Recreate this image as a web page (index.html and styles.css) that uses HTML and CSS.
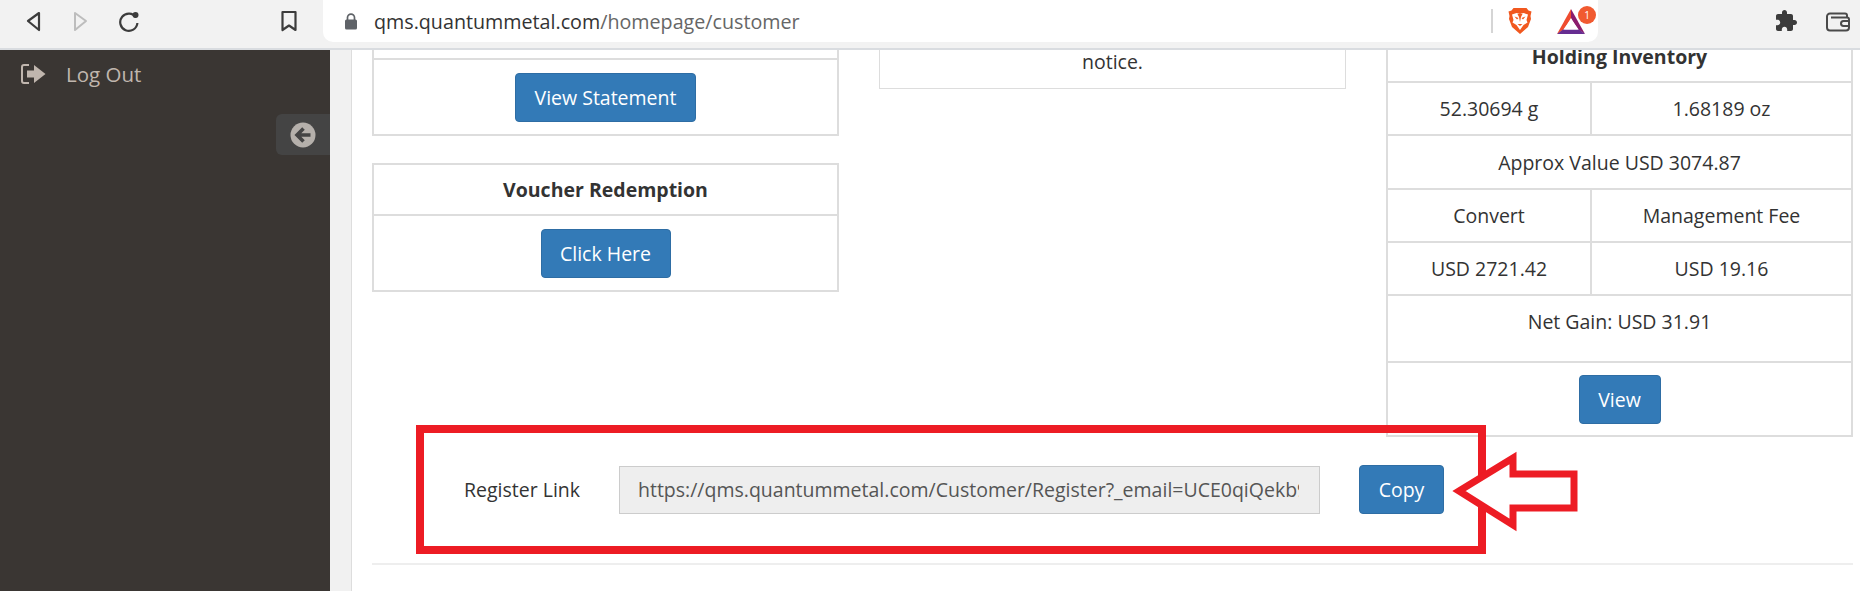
FILE: index.html
```html
<!DOCTYPE html>
<html lang="en">
<head>
    <meta charset="UTF-8">
    <title>Customer</title>
    <link rel="stylesheet" href="styles.css">
</head>
<body>
    <header class="toolbar">
        <button class="nav-btn">
            <svg width="24" height="24" viewBox="0 0 24 24"><path d="M18 4 L7 12 L18 21 Z" fill="none" stroke="#3c3c3c" stroke-width="2.2" stroke-linejoin="round"/></svg>
        </button>
        <button class="nav-btn">
            <svg width="24" height="24" viewBox="0 0 24 24"><path d="M6 4 L17 12 L6 21 Z" fill="none" stroke="#bdbdbd" stroke-width="2" stroke-linejoin="round"/></svg>
        </button>
        <button class="nav-btn">
            <svg width="24" height="24" viewBox="0 0 24 24"><path d="M19 8.5 A8.6 8.6 0 1 0 20.4 14" fill="none" stroke="#3c3c3c" stroke-width="2.2"/><circle cx="18.5" cy="6" r="3" fill="#3c3c3c"/></svg>
        </button>
        <button class="nav-btn bookmark">
            <svg width="24" height="24" viewBox="0 0 24 24"><path d="M5.5 3 H18.5 V21 L12 16.5 L5.5 21 Z" fill="none" stroke="#3c3c3c" stroke-width="2.2" stroke-linejoin="round"/></svg>
        </button>
        <div class="urlbar">
            <svg class="lock" width="14" height="17" viewBox="0 0 14 17"><path d="M3.5 7 V4.6 a3.5 3.5 0 0 1 7 0 V7" fill="none" stroke="#5f6368" stroke-width="1.7"/><rect x="1" y="6.5" width="12" height="10" rx="1.5" fill="#5f6368"/></svg>
            <span class="url"><span class="url-host">qms.quantummetal.com</span>/homepage/customer</span>
            <span class="url-sep"></span>
            <svg class="brave" width="24" height="28" viewBox="0 0 24 28">
                <path d="M5.5 1 H18.5 L20.5 3.5 L23.5 4.5 L22.5 9 L23 12 L20 20 L12 27 L4 20 L1 12 L1.5 9 L0.5 4.5 L3.5 3.5 Z" fill="#f1581f"/>
                <path d="M4 7.5 L8.5 6 L12 7 L15.500 6 L20 7.500 L18.500 13 L19.500 15.500 L15.500 18 L12 23 L8.500 18 L4.500 15.500 L5.500 13 Z" fill="#fff"/>
                <path d="M6.500 9.500 L10.500 11 L9 12.500 Z M17.500 9.500 L13.500 11 L15 12.500 Z M9.500 7 H14.500 L13 10 L12 15 L11 10 Z M9.500 17 H14.500 L12 19 Z" fill="#f1581f"/>
            </svg>
            <span class="bat">
                <svg width="28" height="25" viewBox="0 0 28 25">
                    <path d="M14 0 L14 10 L6 21 L0 25 Z" fill="#ef4c2f"/>
                    <path d="M14 0 L14 10 L22 21 L28 25 Z" fill="#8a1d6d"/>
                    <path d="M0 25 L6 20.5 H22 L28 25 Z" fill="#662d91"/>
                    <path d="M14 9 L21 20.5 H7 Z" fill="#fff"/>
                </svg>
                <span class="bat-badge">1</span>
            </span>
        </div>
        <svg class="puzzle" width="24" height="24" viewBox="0 0 24 24"><path d="M20.5 11H19V7c0-1.1-.9-2-2-2h-4V3.500C13 2.120 11.880 1 10.500 1S8 2.120 8 3.500V5H4c-1.100 0-1.990.9-1.990 2v3.800H3.500c1.490 0 2.700 1.210 2.700 2.700s-1.210 2.700-2.700 2.700H2V20c0 1.100.9 2 2 2h3.800v-1.500c0-1.490 1.210-2.700 2.700-2.700 1.490 0 2.700 1.210 2.700 2.700V22H17c1.100 0 2-.9 2-2v-4h1.500c1.380 0 2.500-1.120 2.500-2.500S21.880 11 20.500 11z" fill="#3c3c3c"/></svg>
        <svg class="wallet" width="24" height="20" viewBox="0 0 24 20"><path d="M21 5.500 V3.500 a2 2 0 0 0 -2 -2 H4 a3 3 0 0 0 -3 3 V15.500 a3 3 0 0 0 3 3 H20 a3 3 0 0 0 3 -3 V7.500 a2 2 0 0 0 -2 -2 H5" fill="none" stroke="#4a4a4a" stroke-width="2"/><path d="M23 9 H17.500 a2.500 2.500 0 0 0 0 5 H23" fill="none" stroke="#4a4a4a" stroke-width="2"/></svg>
    </header>

    <div class="page">
        <aside class="sidebar">
            <a class="side-link">
                <svg width="25" height="20" viewBox="0 0 25 20"><path d="M8 1 H3 a2 2 0 0 0 -2 2 V17 a2 2 0 0 0 2 2 H8" fill="none" stroke="#c0b6ae" stroke-width="2"/><path d="M6 6.500 H13 V1 L24.500 10 L13 19 V13.500 H6 Z" fill="#c0b6ae"/></svg>
                Log Out
            </a>
            <button class="side-toggle">
                <svg width="26" height="26" viewBox="0 0 26 26"><circle cx="13" cy="13" r="12.500" fill="#b5b0ab"/><path d="M20.500 13 H8 M13.500 6.500 L7 13 L13.500 19.500" fill="none" stroke="#444" stroke-width="3.600"/></svg>
            </button>
        </aside>
        <div class="gutter"></div>
        <main class="content">
            <div class="columns">
                <div class="col">
                    <div class="panel">
                        <div class="panel-head panel-head-cut"></div>
                        <div class="panel-foot"><button class="btn btn-wide">View Statement</button></div>
                    </div>
                    <div class="panel">
                        <div class="panel-head">Voucher Redemption</div>
                        <div class="panel-foot"><button class="btn btn-click">Click Here</button></div>
                    </div>
                </div>
                <div class="col">
                    <div class="notice">notice.</div>
                </div>
                <div class="col">
                    <div class="panel">
                        <table class="holding">
                            <tr class="row-51"><th colspan="2">Holding Inventory</th></tr>
                            <tr class="row-53"><td class="half">52.30694 g</td><td>1.68189 oz</td></tr>
                            <tr class="row-54"><td colspan="2">Approx Value USD 3074.87</td></tr>
                            <tr class="row-53"><td class="half">Convert</td><td>Management Fee</td></tr>
                            <tr class="row-53"><td class="half">USD 2721.42</td><td>USD 19.16</td></tr>
                            <tr class="row-67"><td colspan="2" class="top">Net Gain: USD 31.91</td></tr>
                            <tr class="row-73"><td colspan="2"><button class="btn btn-view">View</button></td></tr>
                        </table>
                    </div>
                </div>
            </div>
            <div class="register">
                <label class="register-label">Register Link</label>
                <input class="register-input" type="text" readonly value="https://qms.quantummetal.com/Customer/Register?_email=UCE0qiQekb9sTn2xLm8">
                <button class="btn btn-copy">Copy</button>
            </div>
            <hr class="rule">
        </main>
    </div>

    <svg class="markup" width="1860" height="591" viewBox="0 0 1860 591">
        <rect x="420" y="429" width="1062" height="121" fill="none" stroke="#ed1c24" stroke-width="8"/>
        <path d="M1459 491 L1513 458 V474 H1574 V508 H1513 V525 Z" fill="#fff" stroke="#ed1c24" stroke-width="7"/>
    </svg>
</body>
</html>
```

FILE: styles.css
```css
* {
    box-sizing: border-box;
}

body {
    font-family: 'Open Sans', sans-serif;
    font-size: 19.5px;
    color: #333;
    margin: 0;
    height: 591px;
    overflow: hidden;
    background: #fff;
    position: relative;
}

button {
    font-family: inherit;
}

/* browser bar */
.toolbar {
    height: 50px;
    display: flex;
    align-items: flex-start;
    padding-left: 9px;
    background: #f2f2f2;
    border-bottom: 2px solid #d9dce0;
}

.nav-btn {
    width: 48px;
    height: 42px;
    padding: 0;
    border: 0;
    background: none;
    display: flex;
    align-items: center;
    justify-content: center;
}

.bookmark {
    margin-left: 112px;
}

.urlbar {
    width: 1275px;
    height: 42px;
    margin-left: 10px;
    padding-left: 21px;
    display: flex;
    align-items: center;
    background: #fff;
    border-radius: 0 0 10px 10px;
}

.lock {
    margin-right: 16px;
}

.url {
    width: 1100px;
    font-size: 19.7px;
    color: #666;
}

.url-host {
    color: #333;
}

.url-sep {
    width: 2px;
    height: 24px;
    background: #d5d5d5;
    margin-left: 17px;
}

.brave {
    margin-left: 15px;
}

.bat {
    position: relative;
    display: flex;
    margin-left: 25px;
}

.bat-badge {
    position: absolute;
    top: -3px;
    right: -11px;
    width: 18px;
    height: 18px;
    border-radius: 50%;
    background: #f15a30;
    color: #fff;
    font-size: 10px;
    line-height: 18px;
    text-align: center;
}

.puzzle {
    margin: 9px 0 0 176px;
}

.wallet {
    margin: 12px 0 0 28px;
}

/* page */
.page {
    display: flex;
    height: 541px;
}

.sidebar {
    width: 330px;
    background: #3a3633;
    padding-top: 12px;
    display: flex;
    flex-direction: column;
    align-items: flex-end;
}

.side-link {
    align-self: flex-start;
    display: flex;
    align-items: center;
    gap: 20px;
    margin-left: 21px;
    color: #c0b6ae;
    font-size: 20.5px;
    line-height: 24px;
}

.side-toggle {
    width: 54px;
    height: 41px;
    margin-top: 28px;
    padding: 0 0 0 14px;
    border: 0;
    border-radius: 6px 0 0 6px;
    background: #444;
    display: flex;
    align-items: center;
}

.gutter {
    width: 22px;
    background: #f1f1f1;
    border-right: 1px solid #ddd;
}

.content {
    flex: 1;
    padding-left: 20px;
    overflow: hidden;
}

.columns {
    display: grid;
    grid-template-columns: repeat(3, 467px);
    column-gap: 40px;
    margin-top: -21px;
}

.panel {
    border: 2px solid #ddd;
    background: #fff;
    margin-bottom: 27px;
}

.panel-head {
    height: 51px;
    font-weight: 700;
    display: flex;
    align-items: center;
    justify-content: center;
    border-bottom: 2px solid #ddd;
}

.panel-head-cut {
    height: 29px;
}

.panel-foot {
    display: flex;
    justify-content: center;
    padding: 13px 0 12px;
}

.btn {
    height: 49px;
    padding: 0;
    font-size: 19.5px;
    color: #fff;
    background: #337ab7;
    border: 1px solid #2e6da4;
    border-radius: 4px;
}

.btn-wide {
    width: 181px;
}

.btn-click {
    width: 130px;
}

.btn-view {
    display: block;
    width: 82px;
    margin: 0 auto;
}

.btn-copy {
    width: 85px;
    margin-left: 39px;
}

.notice {
    height: 60px;
    padding-top: 19px;
    border: 1px solid #ddd;
    text-align: center;
    line-height: 25px;
}

.holding {
    width: 100%;
    border-collapse: collapse;
    text-align: center;
}

.holding th,
.holding td {
    padding: 0;
    border-top: 2px solid #ddd;
    font-size: 19.5px;
}

.holding tr:first-child th {
    border-top: 0;
}

.holding .half {
    width: 203px;
    border-right: 2px solid #ddd;
}

.holding .top {
    vertical-align: top;
    padding-top: 12px;
}

.row-51 {
    height: 51px;
}

.row-53 {
    height: 53px;
}

.row-54 {
    height: 54px;
}

.row-67 {
    height: 67px;
}

.row-73 {
    height: 73px;
}

/* register link */
.register {
    display: flex;
    align-items: center;
    margin-top: 1px;
}

.register-label {
    width: 247px;
    padding-left: 92px;
}

.register-input {
    width: 701px;
    height: 48px;
    padding: 0 20px 0 18px;
    font-family: inherit;
    font-size: 19.5px;
    color: #555;
    background: #eee;
    border: 1px solid #ccc;
}

.rule {
    margin: 49px 0 0;
    border: 0;
    border-top: 2px solid #eee;
    width: 1481px;
}

/* red markup drawn on the screenshot */
.markup {
    position: absolute;
    top: 0;
    left: 0;
}
```
